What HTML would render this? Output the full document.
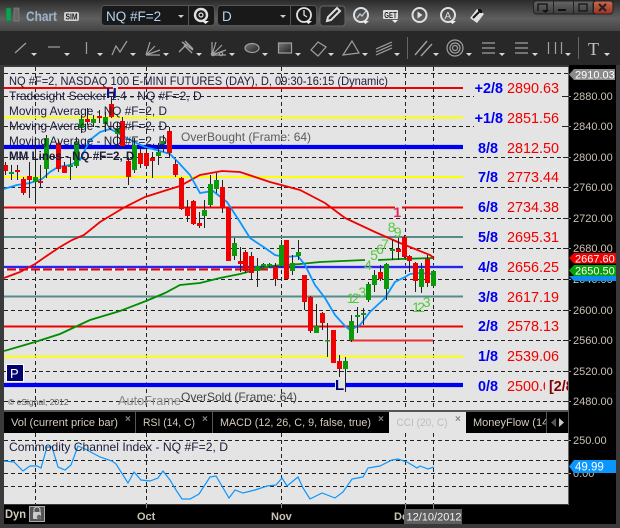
<!DOCTYPE html>
<html><head><meta charset="utf-8"><title>Chart</title>
<style>
html,body{margin:0;padding:0;background:#3a3a3a;width:620px;height:528px;overflow:hidden}
svg{display:block;font-family:"Liberation Sans",Arial,sans-serif}
.ax{font-size:11px;fill:#c9c2b4}
.lv{font-size:14.4px;font-weight:bold;fill:#0000f0;text-anchor:end}
.vl{font-size:14.4px;fill:#f00000}
.lg{font-size:12px;fill:#1c1c3a}
.n{font-size:14px;fill:#55c840;text-anchor:middle}
.tb{font-size:11px;fill:#d3cbbd}
.x{font-size:10px;font-weight:bold;fill:#888}
.ic{fill:none;stroke:#a0a0a0;stroke-width:1.2}
.w{fill:none;stroke:#e0e0e0;stroke-width:2}
</style></head><body>
<svg width="620" height="528" viewBox="0 0 620 528" xmlns="http://www.w3.org/2000/svg">
<defs>
<linearGradient id="tg" x1="0" y1="0" x2="0" y2="1"><stop offset="0" stop-color="#2b2b2b"/><stop offset=".6" stop-color="#5f5f5f"/><stop offset="1" stop-color="#444"/></linearGradient>
<linearGradient id="bg" x1="0" y1="0" x2="0" y2="1"><stop offset="0" stop-color="#666"/><stop offset="1" stop-color="#3c3c3c"/></linearGradient>
<linearGradient id="rg" x1="0" y1="0" x2="0" y2="1"><stop offset="0" stop-color="#c96a50"/><stop offset="1" stop-color="#a03020"/></linearGradient>
<linearGradient id="fg" x1="0" y1="0" x2="1" y2="1"><stop offset="0" stop-color="#777"/><stop offset="1" stop-color="#222"/></linearGradient>
<clipPath id="c1"><rect x="0" y="0" width="545" height="410"/></clipPath>
<clipPath id="c2"><rect x="545" y="370" width="23" height="40"/></clipPath>
<clipPath id="c3"><rect x="470" y="412" width="76" height="21"/></clipPath>
<clipPath id="c4"><rect x="385" y="505" width="19" height="20"/></clipPath>
<clipPath id="c5"><rect x="4" y="67" width="564" height="343"/></clipPath>
</defs>
<rect width="620" height="528" fill="#3a3a3a"/>
<rect width="620" height="31" fill="url(#tg)"/>
<rect y="31" width="620" height="34" fill="#282828"/>
<rect x="0" y="65" width="4" height="463" fill="#3a3a3a"/>

<!-- title bar -->
<rect x="6" y="8" width="5" height="13" fill="#10a050" stroke="#0a7a3a" stroke-width=".6"/>
<rect x="14" y="8" width="5" height="13" fill="#666" stroke="#8a8a8a" stroke-width=".6"/>
<text x="26" y="21" font-size="14" font-weight="bold" fill="#9fb4c8" textLength="31" lengthAdjust="spacingAndGlyphs">Chart</text>
<rect x="64" y="12" width="15" height="9" rx="2" fill="#cfcfcf"/>
<text x="65.5" y="19.6" font-size="8" font-weight="bold" fill="#222" textLength="12" lengthAdjust="spacingAndGlyphs">SIM</text>
<rect x="101.5" y="5.5" width="113" height="20" rx="3" fill="#191919" stroke="#555"/>
<line x1="188.5" y1="6" x2="188.5" y2="25" stroke="#555"/>
<text x="106" y="21" font-size="13.5" fill="#b5d3f2">NQ #F=2</text>
<path d="M178 15h6l-3 3z" fill="#ccc"/>
<circle cx="201" cy="15" r="6" fill="none" stroke="#e0e0e0" stroke-width="2.4"/>
<circle cx="201" cy="15" r="2" fill="none" stroke="#e0e0e0" stroke-width="1.2"/>
<path d="M202 21h7l-3.500 3z" fill="#eee"/>
<rect x="217.500" y="5.500" width="99" height="20" rx="3" fill="#191919" stroke="#555"/>
<line x1="290.500" y1="6" x2="290.500" y2="25" stroke="#555"/>
<text x="222" y="21" font-size="13.500" fill="#b5d3f2">D</text>
<path d="M280 15h6l-3 3z" fill="#ccc"/>
<circle cx="304" cy="15" r="7" fill="none" stroke="#e0e0e0" stroke-width="1.800"/>
<path d="M304 10v5l3 2" fill="none" stroke="#e0e0e0" stroke-width="1.300"/>
<path d="M305 21h7l-3.500 3z" fill="#eee"/>
<rect x="320" y="6" width="25" height="20" rx="3" fill="#2a2a2a" stroke="#666"/>
<path d="M327 21l1-4 9-9 3 3-9 9z" class="w" stroke-width="1.500"/>
<circle cx="361" cy="15" r="7" class="w"/>
<path d="M357 18l3-4 2 2 4-5" fill="none" stroke="#bcd" stroke-width="1.300"/>
<path d="M362 21h7l-3.500 3z" fill="#eee"/>
<rect x="383" y="10" width="15" height="9" rx="1" fill="#ddd"/>
<text x="384.300" y="17.800" font-size="8" font-weight="bold" fill="#222" textLength="12.500" lengthAdjust="spacingAndGlyphs">GET</text>
<path d="M392 20h6l-3 3z" fill="#eee"/>
<circle cx="419.500" cy="15" r="7" class="w"/>
<path d="M417.500 11.500l5 3.500-5 3.500z" fill="#e0e0e0"/>
<circle cx="448" cy="15" r="7" class="w"/>
<text x="444.500" y="19" font-size="10" fill="#ddd">A</text>
<path d="M449 21h7l-3.500 3z" fill="#eee"/>
<path d="M470 18l7-9 7 5-7 9z" fill="#e0e0e0"/>
<path d="M473 18l7-7M481 10l-3 0M481 10l0 3" stroke="#111" stroke-width="2" fill="none"/>
<rect x="533.500" y="1" width="79" height="13" rx="3" fill="url(#bg)" stroke="#222"/>
<rect x="593" y="1" width="20" height="13" rx="3" fill="url(#rg)" stroke="#222"/>
<path d="M553.500 1v13M573.500 1v13M593.500 1v13" stroke="#222"/>
<path d="M538 11V4h9v7M543 11h3" fill="none" stroke="#111" stroke-width="1.300"/>
<path d="M542 10h7l-3.500 3z" fill="#111"/>
<rect x="558" y="9" width="8" height="2" fill="#111"/>
<rect x="579" y="4" width="8" height="7" fill="none" stroke="#111" stroke-width="1.200"/>
<path d="M599 4l7 7M606 4l-7 7" stroke="#222" stroke-width="2.200"/>

<!-- toolbar icons -->
<g class="ic">
<path d="M15 53L26 43"/><path d="M48 47H60"/><path d="M86.500 42V54"/>
<path d="M112 55L116 46L120 52L127 41"/>
<path d="M146 55L150 42M146 55L155 46M146 55L160 50M146 55H160"/>
<path d="M179 52L187 44M182 42L193 50M185 41L193 49M184 45L192 53" stroke-width="1.400"/>
<path d="M212 42V55H226M212 55L216 42M212 55L222 45M212 55L226 50"/>
<circle cx="213" cy="54" r="1.700"/><circle cx="221" cy="54" r="1.700"/>
<ellipse cx="252" cy="48" rx="7" ry="4.500" fill="url(#fg)"/>
<rect x="278.500" y="43" width="13" height="10" fill="url(#fg)"/>
<path d="M311 50L318 42L326 47L318 56Z"/>
<path d="M343 55L352 41L359 53Z"/>
<path d="M376 49L392 42M376 52L392 45M376 55L392 48"/>
<path d="M415 55L427 41M421 56L432 44" stroke-width="1.400"/>
<circle cx="455" cy="48" r="8"/><circle cx="455" cy="48" r="5"/><circle cx="455" cy="48" r="2.500"/>
<path d="M482 43H495M482 48H495M482 53H495"/>
<path d="M515 43H528M515 48H528M515 53H528"/>
<path d="M548.500 42V54M555.500 42V54M561.500 42V54"/>
</g>
<path d="M407.500 37V59M578.500 37V59" stroke="#666"/>
<text x="588" y="55" font-family="Liberation Serif" font-size="18" fill="#c4c4c4">T</text>
<path d="M31 53h6l-3 3zM64 53h6l-3 3zM97 53h6l-3 3zM130 53h6l-3 3zM163 53h6l-3 3zM196 53h6l-3 3zM229 53h6l-3 3zM262 53h6l-3 3zM295 53h6l-3 3zM328 53h6l-3 3zM362 53h6l-3 3zM394 53h6l-3 3zM433 53h6l-3 3zM466 53h6l-3 3zM499 53h6l-3 3zM532 53h6l-3 3zM565 53h6l-3 3zM604 53h6l-3 3z" fill="#d8d8d8"/>

<!-- price pane -->
<rect x="4" y="67" width="565" height="343" fill="#e4e4e4"/>
<rect x="569" y="65" width="47" height="347" fill="#000"/>
<rect x="568" y="67" width="1" height="345" fill="#666"/>
<rect x="4" y="410" width="565" height="2" fill="#555"/>
<rect x="569" y="412" width="47" height="112" fill="#000"/>
<rect x="616" y="65" width="4" height="463" fill="#3a3a3a"/>

<g clip-path="url(#c5)">
<path d="M4 73.500H568M4 96.500H474M4 126.500H474M4 157.500H568M4 187.500H568M4 218.500H568M4 248.500H568M4 279.500H568M4 310.500H568M4 340.500H568M4 371.500H568M4 401.500H568M35.500 67V410M146.500 67V410M281.500 67V410M405.500 67V410M433.500 67V410" stroke="#222" stroke-dasharray="4 3" fill="none"/>
<path d="M562 96.500H568M562 126.500H568" stroke="#222" stroke-dasharray="4 2"/>

<!-- levels -->
<path d="M4 88H113M118 88H463" stroke="#f00000" stroke-width="2"/>
<path d="M4 117.500H463M4 177H463M4 356.500H463" stroke="#ffff00" stroke-width="2"/>
<path d="M4 147H463M4 385H335M346 385H463" stroke="#b0b0ee" stroke-width="5"/>
<path d="M4 147H463M4 385H335M346 385H463" stroke="#0000f0" stroke-width="4"/>
<path d="M4 207.500H395M402 207.500H463M4 326.500H463" stroke="#f00000" stroke-width="2"/>
<path d="M4 237H463M4 296.500H463" stroke="#568c8c" stroke-width="2"/>
<path d="M4 267H463" stroke="#9a9aee" stroke-width="3"/>
<path d="M4 267H463" stroke="#0000f0" stroke-width="1.600"/>
<path d="M4 269.500H270" stroke="#f00000" stroke-width="2"/>
<path d="M4 269.500H270" stroke="#fff" stroke-width="2" stroke-dasharray="3 9" />
<path d="M350 340.500H433" stroke="#e83030" stroke-width="2"/>

<!-- moving averages -->
<polyline fill="none" stroke="#008c00" stroke-width="1.800" points="4,351 35,342 60,334 90,320 120,311 146,301 165,293 180,285 200,283 220,278 240,274 270,266 300,264 320,262 365,260"/>
<polyline fill="none" stroke="#008c00" stroke-width="1.800" points="378,260 400,259 433,258"/>
<polyline fill="none" stroke="#f00000" stroke-width="1.800" points="4,278 20,272 35,264 48,255 60,247 72,240 84,235 100,222 125,207 145,197 167,190 180,186 200,175 222,171 240,172 255,177 270,182 300,190 325,203 345,218 375,232 400,243 430,255 434,258"/>
<polyline fill="none" stroke="#0a96ff" stroke-width="1.800" points="4,189 17,185 30,183 42,179 50,172 58,167 70,165 80,160 90,140 100,132 110,129 118,133 130,140 145,147 160,151 170,154 178,162 190,175 200,193 213,191 227,202 240,222 250,238 265,248 275,255 285,257 298,256 305,265 315,285 325,298 335,315 345,326 350,330 360,325 370,312 385,298 395,282 405,277 410,274 420,273 433,274"/>

<!-- wicks -->
<path stroke="#222" fill="none" d="M5.500 162V175M11.500 165V180M17.500 165V180M23.500 177V195M29.500 162V198M35.500 138V203M40.500 165V187M46.500 135V178M58.500 140V172M64.500 162V173M70.500 158V180M76.500 137V168M81.500 115V133M87.500 108V125M93.500 115V127M99.500 110V123M105.500 112V132M111.500 97V118M117.500 122V148M122.500 117V149M128.500 157V185M134.500 138V173M140.500 148V168M146.500 148V168M152.500 152V178M158.500 143V165M163.500 135V152M169.500 127V158M175.500 160V177M181.500 177V210M187.500 200V222M193.500 200V225M199.500 212V228M204.500 200V228M210.500 175V207M216.500 173V193M222.500 180V213M228.500 208V261M234.500 238V260M240.500 247V272M245.500 250V273M251.500 252V280M257.500 258V287M263.500 263V267M269.500 263V267M275.500 263V286M281.500 240V268M286.500 240V279M292.500 255V275M298.500 240V260M304.500 275V310M310.500 296V333M316.500 304V333M322.500 312V330M327.500 323V357M333.500 330V363M339.500 355V377M345.500 357V392M351.500 315V342M357.500 307V333M363.500 308V325M368.500 282V302M374.500 270V292M380.500 265V281M386.500 263V300M392.500 240V260M398.500 238V260M404.500 235V258M409.500 255V272M415.500 262V292M421.500 263V293M427.500 255V287M433.500 270V287"/>
<!-- red bodies -->
<path stroke="#f00000" stroke-width="5" fill="none" d="M5.500 165V171M17.500 170V172M23.500 179V193M29.500 176V180M40.500 181V183M58.500 143V169M64.500 166V173M87.500 119V122M99.500 116V118M111.500 104V117M122.500 121V146M128.500 161V177M140.500 153V164M146.500 153V166M152.500 158V161M169.500 131V153M175.500 164V175M181.500 178V209M187.500 208V216M193.500 201V224M199.500 223V226M222.500 187V208M228.500 208V261M240.500 261V264M245.500 252V271M251.500 256V273M275.500 267V279M286.500 240V279M304.500 275V302M310.500 297V331M322.500 313V323M333.500 330V363M339.500 361V369M380.500 272V279M398.500 249V252M404.500 237V257M409.500 256V261M415.500 263V281M427.500 259V283"/>
<!-- green bodies -->
<path stroke="#0a9a0a" stroke-width="5" fill="none" d="M11.500 172V174M35.500 177V182M46.500 138V169M70.500 165V167M76.500 142V166M81.500 119V128M93.500 119V123M105.500 117V124M117.500 128V134M134.500 145V170M158.500 152V156M163.500 141V144M204.500 210V216M210.500 184V205M216.500 180V189M234.500 243V256M257.500 266V271M263.500 264V266M269.500 264V266M281.500 245V266M292.500 263V271M298.500 252V256M316.500 326V333M327.500 340V341.500M345.500 361V369M351.500 321V340M357.500 315V317M363.500 313V315M368.500 284V300M374.500 275V285M386.500 264V289M392.500 249V251M421.500 269V287M433.500 271V286"/>

<!-- elliot numbers -->
<text x="397.300" y="217" font-size="14" font-weight="bold" fill="#e8205a" text-anchor="middle">1</text>
<text class="n" x="391.700" y="232">8</text><text class="n" x="397.700" y="237">9</text>
<text class="n" x="385" y="249">7</text><text class="n" x="380" y="254">6</text><text class="n" x="374" y="260">5</text><text class="n" x="368" y="270">4</text>
<text class="n" x="350.700" y="303">1</text><text class="n" x="355.700" y="303">2</text><text class="n" x="362.300" y="297">3</text>
<text class="n" x="416" y="312">1</text><text class="n" x="421" y="312">2</text><text class="n" x="426.700" y="307">3</text>
<text x="106" y="98" font-size="15" font-weight="bold" fill="#10108a">H</text>
<text x="335" y="390" font-size="15" font-weight="bold" fill="#00006e">L</text>

<!-- legend -->
<text class="lg" x="9" y="85" textLength="379" lengthAdjust="spacingAndGlyphs">NQ #F=2, NASDAQ 100 E-MINI FUTURES (DAY), D, 09:30-16:15 (Dynamic)</text>
<text class="lg" x="9" y="100">Tradesight Seeker 1.4 - NQ #F=2, D</text>
<text class="lg" x="9" y="115" textLength="158" lengthAdjust="spacingAndGlyphs">Moving Average - NQ #F=2, D</text>
<text class="lg" x="9" y="130" textLength="158" lengthAdjust="spacingAndGlyphs">Moving Average - NQ #F=2, D</text>
<text class="lg" x="9" y="145" textLength="158" lengthAdjust="spacingAndGlyphs">Moving Average - NQ #F=2, D</text>
<text class="lg" x="9" y="160" style="font-weight:bold;font-size:11.6px">MM Lines - NQ #F=2, D</text>
<text x="181" y="141" font-size="12" fill="#5c5c5c">OverBought (Frame: 64)</text>
<text x="181" y="401" font-size="12" fill="#444">OverSold (Frame: 64)</text>
<text x="118" y="405" font-size="13" fill="#8a8a8a" textLength="63" lengthAdjust="spacingAndGlyphs">AutoFrame</text>
<text x="8" y="405" font-size="8.500" fill="#555">© eSignal, 2012</text>
<rect x="6.500" y="364.500" width="17" height="17" fill="#000070" stroke="#fff"/>
<text x="10" y="378" font-size="13" fill="#fff">P</text>

<!-- level labels -->
<g>
<text class="lv" x="503" y="93">+2/8</text><text class="vl" x="507" y="93">2890.63</text>
<text class="lv" x="503" y="123">+1/8</text><text class="vl" x="507" y="123">2851.56</text>
<text class="lv" x="498" y="153">8/8</text><text class="vl" x="507" y="153">2812.50</text>
<text class="lv" x="498" y="182">7/8</text><text class="vl" x="507" y="182">2773.44</text>
<text class="lv" x="498" y="212">6/8</text><text class="vl" x="507" y="212">2734.38</text>
<text class="lv" x="498" y="242">5/8</text><text class="vl" x="507" y="242">2695.31</text>
<text class="lv" x="498" y="272">4/8</text><text class="vl" x="507" y="272">2656.25</text>
<text class="lv" x="498" y="302">3/8</text><text class="vl" x="507" y="302">2617.19</text>
<text class="lv" x="498" y="331">2/8</text><text class="vl" x="507" y="331">2578.13</text>
<text class="lv" x="498" y="361">1/8</text><text class="vl" x="507" y="361">2539.06</text>
<text class="lv" x="498" y="391">0/8</text><text class="vl" x="507" y="391" clip-path="url(#c1)">2500.00</text>
<text x="549" y="391" font-size="14.400" font-weight="bold" fill="#800000" clip-path="url(#c2)">[2/8</text>
</g>
</g>
<path d="M563 96.500h6M563 126.500h6M563 157.500h6M563 187.500h6M563 218.500h6M563 248.500h6M563 279.500h6M563 310.500h6M563 340.500h6M563 371.500h6M563 401.500h6" stroke="#222"/>
<path d="M569 96.500h2M569 126.500h2M569 157.500h2M569 187.500h2M569 218.500h2M569 248.500h2M569 279.500h2M569 310.500h2M569 340.500h2M569 371.500h2M569 401.500h2" stroke="#999"/>

<!-- price axis -->
<g class="ax">
<text x="573" y="100">2880.00</text><text x="573" y="130">2840.00</text><text x="573" y="161">2800.00</text><text x="573" y="191">2760.00</text><text x="573" y="222">2720.00</text><text x="573" y="252">2680.00</text><text x="573" y="283">2640.00</text><text x="573" y="314">2600.00</text><text x="573" y="344">2560.00</text><text x="573" y="375">2520.00</text><text x="573" y="405">2480.00</text>
</g>
<path d="M574 69H615V80H574L569 74.500Z" fill="#8a8a8a"/>
<text x="575" y="78.500" font-size="11" fill="#fff">2910.03</text>
<path d="M574 276H616V281H574L569 276Z" fill="#0a8cf0"/>
<path d="M574 253H616V263.500H574L569 258Z" fill="#f00000"/>
<text x="575" y="262.500" font-size="11" fill="#fff">2667.60</text>
<path d="M574 265H616V276H574L569 270.500Z" fill="#08a008"/>
<text x="575" y="274.500" font-size="11" fill="#fff">2650.50</text>

<!-- tabs -->
<rect x="4" y="412" width="565" height="21" fill="#000"/>
<path d="M135.500 412V433M212.500 412V433M546.500 412V433M568.500 412V433" stroke="#555"/>
<text class="tb" x="11" y="426" textLength="107" lengthAdjust="spacingAndGlyphs">Vol (current price bar)</text>
<text class="tb" x="143" y="426" textLength="52" lengthAdjust="spacingAndGlyphs">RSI (14, C)</text>
<text class="tb" x="220" y="426" textLength="151" lengthAdjust="spacingAndGlyphs">MACD (12, 26, C, 9, false, true)</text>
<rect x="389" y="412" width="77" height="21" fill="#e4e4e4"/>
<text x="396.500" y="426" font-size="11" fill="#bdbdbd" textLength="51" lengthAdjust="spacingAndGlyphs">CCI (20, C)</text>
<text class="tb" x="473" y="426" clip-path="url(#c3)">MoneyFlow (14, C)</text>
<text class="x" x="125" y="422">×</text><text class="x" x="202" y="422">×</text><text class="x" x="378" y="422">×</text><text class="x" x="455" y="422">×</text>
<path d="M556 418v9l-5-4.500z" fill="#555"/><path d="M559 418v9l5-4.500z" fill="#ccc"/>

<!-- CCI pane -->
<rect x="4" y="433" width="564" height="71" fill="#e4e4e4"/>
<rect x="568" y="433" width="1" height="72" fill="#666"/>
<path d="M4 440.500H568M4 460.500H568M4 473.500H568M4 486.500H568M35.500 433V504M146.500 433V510M281.500 433V510M405.500 433V504M433.500 433V504" stroke="#222" stroke-dasharray="4 3" fill="none"/>
<polyline fill="none" stroke="#0a96ff" stroke-width="1.200" points="4,461 14,462 23,471 30,466 37,466 41,468 47,447 52,447 58,467 65,470 71,465 78,446 85,449 100,457 112,461 116,464 128,483 134,472 141,480 150,481 158,478 163,471 170,480 176,490 182,499 190,499 199,494 210,477 216,476 229,498 235,490 243,493 255,490 267,486 276,485 282,478 287,486 298,477 303,488 310,499 322,493 335,498 343,492 352,479 363,477 368,468 380,466 392,460 398,459 407,462 417,468 420,466 428,469 434,467"/>
<text class="lg" x="9" y="451" textLength="219" lengthAdjust="spacingAndGlyphs">Commodity Channel Index - NQ #F=2, D</text>

<!-- lower axis -->
<text class="ax" x="573" y="444">250.00</text>
<text class="ax" x="573" y="477">0.00</text>
<path d="M569 440.500h2M569 473.500h2" stroke="#999"/>
<path d="M574 460H616V473H574L569 466.500Z" fill="#0a96ff"/>
<text x="575" y="470.500" font-size="11.500" fill="#fff">49.99</text>

<!-- time axis -->
<rect x="4" y="505" width="565" height="19" fill="#000"/>
<path d="M146.500 504V508M281.500 504V508M405.500 504V509M433.500 504V509" stroke="#888"/>
<text x="5" y="518" font-size="12" font-weight="bold" fill="#d0cabc" textLength="21" lengthAdjust="spacingAndGlyphs">Dyn</text>
<rect x="29.500" y="506.500" width="15" height="15" fill="#555" stroke="#aaa"/>
<path d="M34 512v-2a3 3 0 0 1 6 0v2" fill="none" stroke="#ccc"/>
<rect x="33" y="512" width="8" height="7" rx="1" fill="#ccc"/><circle cx="39" cy="517" r="2.200" fill="#666"/>
<text x="137" y="520" font-size="11" font-weight="bold" fill="#c9c2b4">Oct</text>
<text x="271" y="520" font-size="11" font-weight="bold" fill="#c9c2b4">Nov</text>
<text x="394" y="520" font-size="11" font-weight="bold" fill="#c9c2b4" clip-path="url(#c4)">Dec</text>
<rect x="404" y="509" width="58" height="15" fill="#5e5e5e"/>
<text x="406.500" y="520.500" font-size="11" fill="#f2f2f2">12/10/2012</text>
</svg>
</body></html>
